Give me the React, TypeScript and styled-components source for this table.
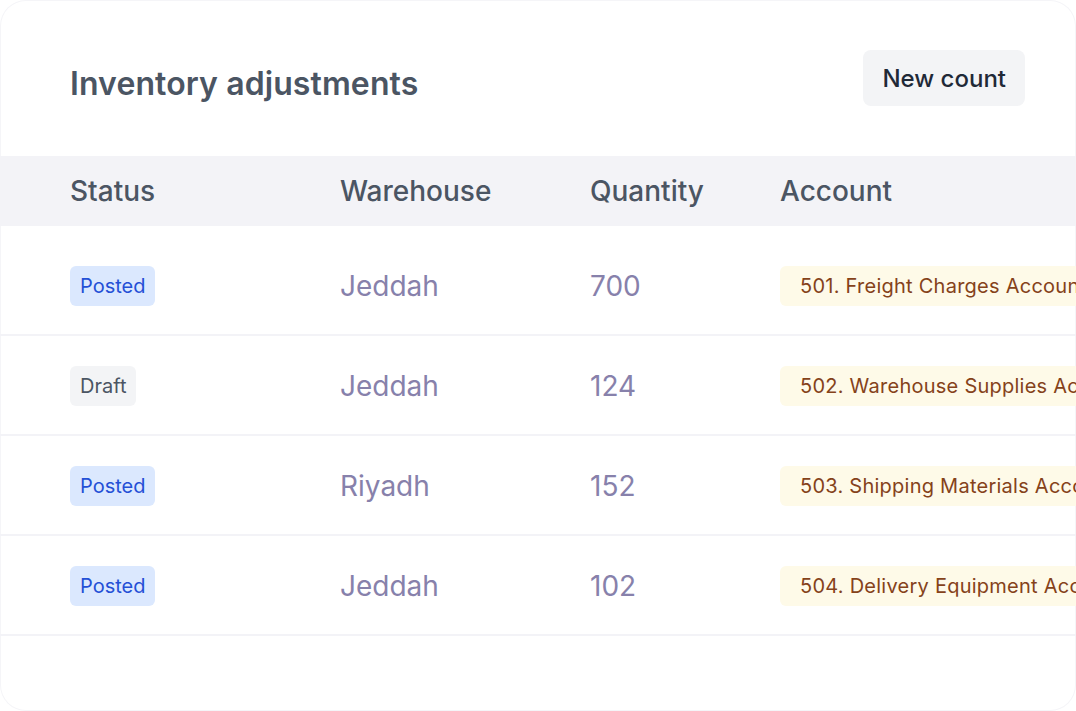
import React from "react";
import styled, { createGlobalStyle } from "styled-components";

const Global = createGlobalStyle`
  html, body { margin: 0; padding: 0; background: #ffffff; }
  body { font-family: Inter, "Noto Sans", sans-serif; -webkit-font-smoothing: antialiased; }
`;

const Card = styled.div`
  width: 1076px;
  height: 711px;
  box-sizing: border-box;
  border-radius: 26px;
  box-shadow: inset 0 0 0 1px #f5f5f8;
  background: #ffffff;
  overflow: hidden;
  display: flex;
  flex-direction: column;
`;

const TopBar = styled.div`
  display: flex;
  align-items: center;
  justify-content: space-between;
  padding: 50px 51px 0 70px;
  height: 106px;
  box-sizing: border-box;
`;

const Title = styled.h1`
  margin: 0;
  font-size: 32px;
  font-weight: 600;
  letter-spacing: 0.1px;
  color: #4b5563;
  padding-top: 10px;
`;

const Button = styled.button`
  border: none;
  background: #f3f4f6;
  color: #1f2937;
  font-family: inherit;
  font-size: 24px;
  font-weight: 500;
  height: 56px;
  padding: 0 19px;
  border-radius: 8px;
  align-self: flex-start;
`;

const Table = styled.div`
  margin-top: 50px;
  display: flex;
  flex-direction: column;
`;

const Cols = `grid-template-columns: 270px 250px 190px 1fr;`;

const HeadRow = styled.div`
  display: grid;
  ${Cols}
  align-items: center;
  height: 70px;
  padding-left: 70px;
  background: #f3f3f7;
`;

const HeadCell = styled.div`
  font-size: 28px;
  font-weight: 500;
  color: #4b5563;
`;

const Body = styled.div`
  padding-top: 10px;
  display: flex;
  flex-direction: column;
`;

const Row = styled.div`
  display: grid;
  ${Cols}
  align-items: center;
  height: 100px;
  box-sizing: border-box;
  padding-left: 70px;
  padding-top: 2px;
  border-bottom: 2px solid #f3f3f7;
`;

const Cell = styled.div`
  font-size: 28px;
  color: #8781ab;
  white-space: nowrap;
`;

const Badge = styled.span<{ $tone: "blue" | "gray" }>`
  display: inline-flex;
  align-items: center;
  height: 40px;
  padding: 0 10px;
  border-radius: 6px;
  font-size: 20px;
  background: ${(p) => (p.$tone === "blue" ? "#dbe8fe" : "#f3f4f6")};
  color: ${(p) => (p.$tone === "blue" ? "#2450d6" : "#4b5563")};
`;

const AccountBadge = styled.span`
  display: inline-flex;
  align-items: center;
  height: 40px;
  padding: 0 20px;
  border-radius: 6px;
  font-size: 20px;
  letter-spacing: 0.25px;
  background: #fefae8;
  color: #85421a;
  white-space: nowrap;
`;

const rows = [
  { status: "Posted", wh: "Jeddah", qty: "700", acct: "501. Freight Charges Account" },
  { status: "Draft", wh: "Jeddah", qty: "124", acct: "502. Warehouse Supplies Account" },
  { status: "Posted", wh: "Riyadh", qty: "152", acct: "503. Shipping Materials Account" },
  { status: "Posted", wh: "Jeddah", qty: "102", acct: "504. Delivery Equipment Account" },
];

export default function App() {
  return (
    <>
      <Global />
      <Card>
        <TopBar>
          <Title>Inventory adjustments</Title>
          <Button>New count</Button>
        </TopBar>
        <Table>
          <HeadRow>
            <HeadCell>Status</HeadCell>
            <HeadCell>Warehouse</HeadCell>
            <HeadCell>Quantity</HeadCell>
            <HeadCell>Account</HeadCell>
          </HeadRow>
          <Body>
            {rows.map((r, i) => (
              <Row key={i}>
                <Cell>
                  <Badge $tone={r.status === "Posted" ? "blue" : "gray"}>{r.status}</Badge>
                </Cell>
                <Cell>{r.wh}</Cell>
                <Cell>{r.qty}</Cell>
                <Cell>
                  <AccountBadge>{r.acct}</AccountBadge>
                </Cell>
              </Row>
            ))}
          </Body>
        </Table>
      </Card>
    </>
  );
}
